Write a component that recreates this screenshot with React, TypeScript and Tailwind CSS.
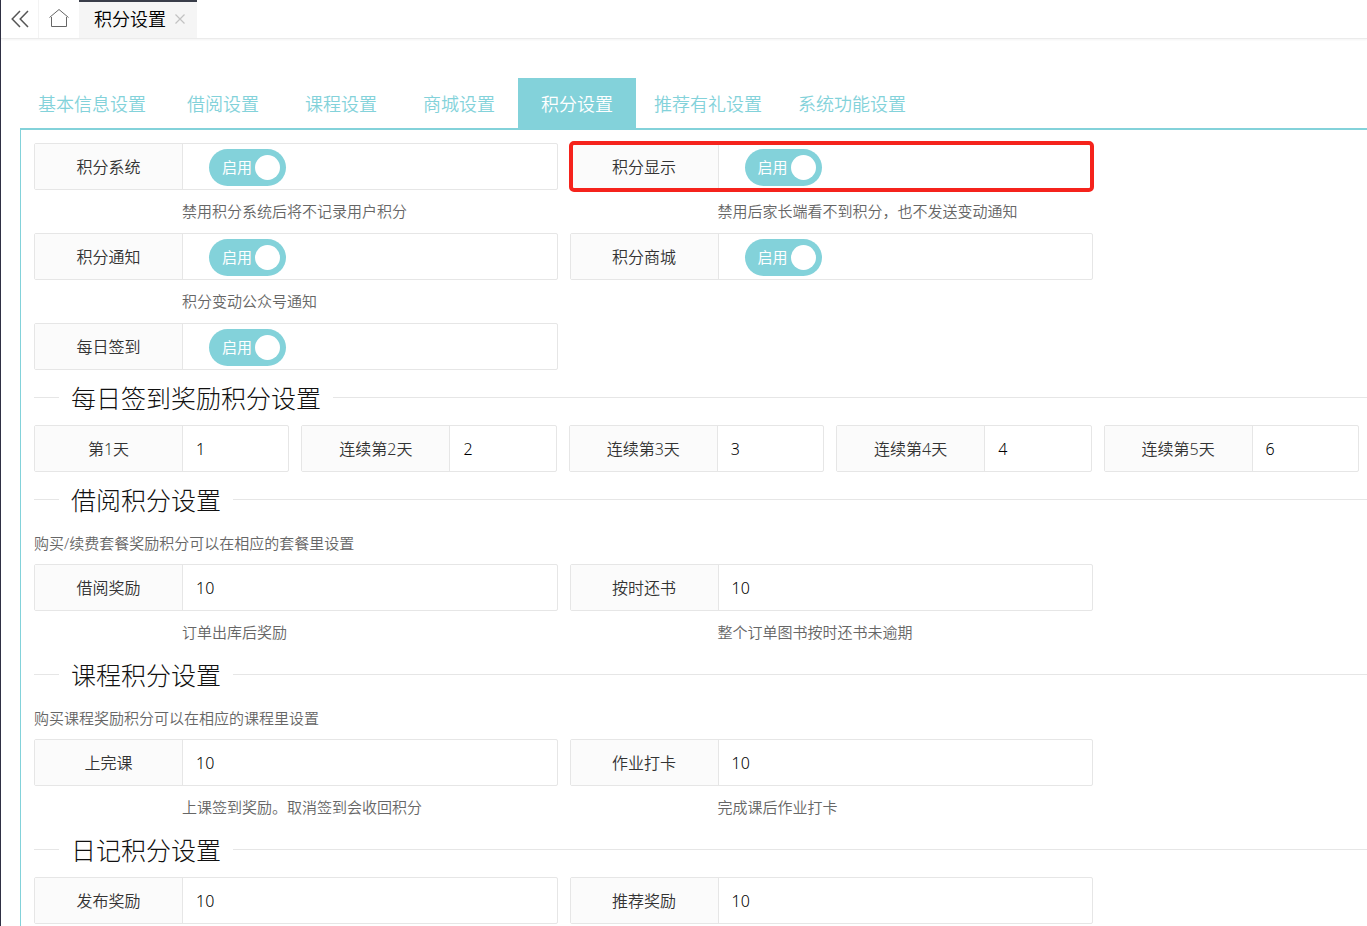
import { useState } from "react";
import type { ReactNode } from "react";

const tabs = ["基本信息设置", "借阅设置", "课程设置", "商城设置", "积分设置", "推荐有礼设置", "系统功能设置"];

type SwitchItem = { id: string; label: string; hint?: string; marked?: boolean };
type NumberItem = { id: string; label: string; value: string; hint?: string };

const switches: SwitchItem[] = [
  { id: "points", label: "积分系统", hint: "禁用积分系统后将不记录用户积分" },
  { id: "display", label: "积分显示", hint: "禁用后家长端看不到积分，也不发送变动通知", marked: true },
  { id: "notice", label: "积分通知", hint: "积分变动公众号通知" },
  { id: "mall", label: "积分商城" },
  { id: "checkin", label: "每日签到" },
];

const days: NumberItem[] = [
  { id: "day1", label: "第1天", value: "1" },
  { id: "day2", label: "连续第2天", value: "2" },
  { id: "day3", label: "连续第3天", value: "3" },
  { id: "day4", label: "连续第4天", value: "4" },
  { id: "day5", label: "连续第5天", value: "6" },
];

const borrow: NumberItem[] = [
  { id: "borrow", label: "借阅奖励", value: "10", hint: "订单出库后奖励" },
  { id: "return", label: "按时还书", value: "10", hint: "整个订单图书按时还书未逾期" },
];

const course: NumberItem[] = [
  { id: "class", label: "上完课", value: "10", hint: "上课签到奖励。取消签到会收回积分" },
  { id: "homework", label: "作业打卡", value: "10", hint: "完成课后作业打卡" },
];

const diary: NumberItem[] = [
  { id: "publish", label: "发布奖励", value: "10" },
  { id: "recommend", label: "推荐奖励", value: "10" },
];

function Field({ id, label, hint, marked, children }: {
  id: string;
  label: string;
  hint?: string;
  marked?: boolean;
  children: ReactNode;
}) {
  return (
    <div>
      <div className="relative flex h-[47px] rounded-[2px] border border-[#e6e6e6]">
        <label
          htmlFor={id}
          className="flex w-[148px] shrink-0 items-center justify-center border-r border-[#e6e6e6] bg-[#fbfbfb] text-[#333]"
        >
          {label}
        </label>
        {children}
        {marked && (
          <div className="pointer-events-none absolute -inset-x-[2px] -inset-y-[3px] rounded-[5px] border-4 border-[#f5231c]" />
        )}
      </div>
      {hint && <p className="pt-[6px] pl-[148px] text-[15px] leading-[30px] text-[#666]">{hint}</p>}
    </div>
  );
}

function Switch({ id }: { id: string }) {
  const [on, setOn] = useState(true);
  return (
    <div className="flex items-start pt-[5px] pl-[26px]">
      <label
        className={
          on
            ? "relative flex h-[37px] w-[77px] cursor-pointer items-center justify-between rounded-full bg-[#83d2da] pr-[6px] pl-[13px] text-[15px] font-normal text-white"
            : "relative flex h-[37px] w-[77px] cursor-pointer flex-row-reverse items-center justify-between rounded-full bg-[#d2d2d2] pr-[13px] pl-[6px] text-[15px] font-normal text-white"
        }
      >
        <input id={id} type="checkbox" className="sr-only" checked={on} onChange={() => setOn(!on)} />
        <span>{on ? "启用" : "禁用"}</span>
        <span className="size-[25px] rounded-full bg-white" />
      </label>
    </div>
  );
}

function NumberInput({ id, value }: { id: string; value: string }) {
  return (
    <input
      id={id}
      type="text"
      defaultValue={value}
      className="w-full min-w-0 flex-1 bg-transparent pl-[13px] text-black outline-none"
    />
  );
}

function Heading({ children }: { children: ReactNode }) {
  return (
    <div className="flex h-[55px] items-center">
      <span className="h-px w-[25px] bg-[#e6e6e6]" />
      <h2 className="px-3 text-[25px] leading-[38px] font-light text-[#111]">{children}</h2>
      <span className="h-px flex-1 bg-[#e6e6e6]" />
    </div>
  );
}

function Intro({ children }: { children: ReactNode }) {
  return <p className="pt-px pb-[6px] text-[15px] leading-[30px] text-[#666]">{children}</p>;
}

function NumberFields({ items, columns }: { items: NumberItem[]; columns: "five" | "two" }) {
  return (
    <div
      className={
        columns === "five"
          ? "grid grid-cols-5 gap-x-[12px] pr-[8px]"
          : "grid grid-cols-[2fr_2fr_1fr] gap-x-[12px]"
      }
    >
      {items.map((item) => (
        <Field key={item.id} id={item.id} label={item.label} hint={item.hint}>
          <NumberInput id={item.id} value={item.value} />
        </Field>
      ))}
    </div>
  );
}

export default function App() {
  return (
    <div className="flex min-h-screen flex-col border-l border-[#2f3044] bg-white font-['Noto_Sans','Noto_Sans_CJK_SC',sans-serif] text-[16px] font-[350]">
      <header className="flex h-[39px] border-b border-[#ebebeb] shadow-[0_1px_2px_rgba(0,0,0,0.05)]">
        <button type="button" aria-label="后退" className="flex w-[38px] items-center justify-center border-r border-[#f3f3f3]">
          <svg width="18" height="18" viewBox="0 0 18 18" fill="none" stroke="#555" strokeWidth="1.5">
            <path d="M9 1 1.2 9 9 17M17 1 9.2 9 17 17" />
          </svg>
        </button>
        <button type="button" aria-label="首页" className="flex w-[40px] items-center justify-center pb-[2px]">
          <svg width="20" height="20" viewBox="0 0 20 20" fill="none" stroke="#666" strokeWidth="1">
            <path d="M.5 9.5 10 1.500l9.500 8M2.500 9v9.500h15V9" />
          </svg>
        </button>
        <div className="flex w-[118px] items-start border-t-2 border-[#393d49] bg-[#f5f5f5] pl-[15px] text-[18px] leading-[34px] text-black">
          <span>积分设置</span>
          <button type="button" aria-label="关闭" className="ml-[9px] flex h-[34px] items-center">
            <svg width="10" height="10" viewBox="0 0 10 10" fill="none" stroke="#c2c2c2" strokeWidth="1.200">
              <path d="M.5.5l9 9M9.500.5l-9 9" />
            </svg>
          </button>
        </div>
      </header>

      <main className="flex flex-1 flex-col pt-[39px] pl-[19px]">
        <nav className="flex border-b-2 border-[#83d2da] text-[18px]">
          {tabs.map((tab) => (
            <a
              key={tab}
              href="#"
              aria-current={tab === "积分设置" ? "page" : undefined}
              className={
                tab === "积分设置"
                  ? "flex h-[50px] min-w-[118px] items-center justify-center bg-[#83d2da] px-[18px] pt-[2px] text-white"
                  : "flex h-[50px] min-w-[118px] items-center justify-center px-[18px] pt-[2px] text-[#83d2da]"
              }
            >
              {tab}
            </a>
          ))}
        </nav>

        <div className="flex-1 border-l border-[#83d2da] pt-[13px] pl-[13px]">
          <div className="grid grid-cols-[2fr_2fr_1fr] gap-x-[12px] gap-y-[7px]">
            {switches.map((item, i) => (
              <div key={item.id} className={i % 2 === 0 ? "col-start-1" : "col-start-2"}>
                <Field id={item.id} label={item.label} hint={item.hint} marked={item.marked}>
                  <Switch id={item.id} />
                </Field>
              </div>
            ))}
          </div>

          <Heading>每日签到奖励积分设置</Heading>
          <NumberFields items={days} columns="five" />

          <Heading>借阅积分设置</Heading>
          <Intro>购买/续费套餐奖励积分可以在相应的套餐里设置</Intro>
          <NumberFields items={borrow} columns="two" />

          <Heading>课程积分设置</Heading>
          <Intro>购买课程奖励积分可以在相应的课程里设置</Intro>
          <NumberFields items={course} columns="two" />

          <Heading>日记积分设置</Heading>
          <NumberFields items={diary} columns="two" />
        </div>
      </main>
    </div>
  );
}
